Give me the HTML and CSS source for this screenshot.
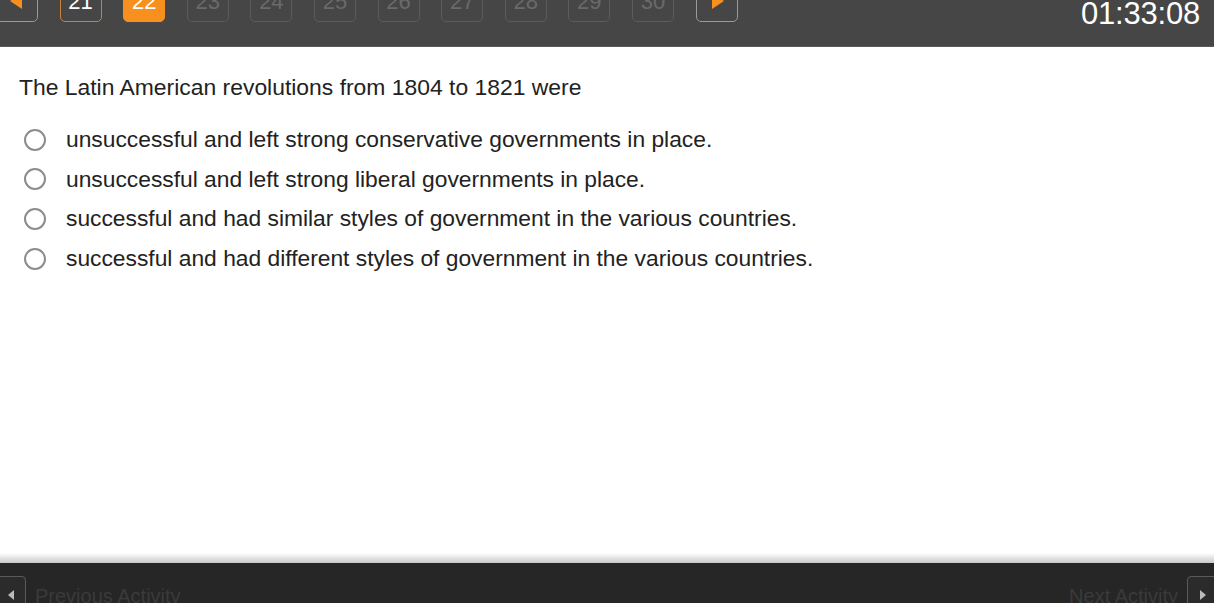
FILE: index.html
```html
<!DOCTYPE html>
<html lang="en">
<head>
    <meta charset="UTF-8">
    <title>Assignment</title>
    <link rel="stylesheet" href="styles.css">
</head>
<body>
    <header class="top-bar">
        <nav class="pager">
            <button class="page-btn arrow">
                <svg width="12" height="16" viewBox="0 0 12 16"><polygon points="12,0 12,16 0,8" fill="#f7901e"/></svg>
            </button>
            <button class="page-btn visited">21</button>
            <button class="page-btn current">22</button>
            <button class="page-btn">23</button>
            <button class="page-btn">24</button>
            <button class="page-btn">25</button>
            <button class="page-btn">26</button>
            <button class="page-btn">27</button>
            <button class="page-btn">28</button>
            <button class="page-btn">29</button>
            <button class="page-btn">30</button>
            <button class="page-btn arrow next">
                <svg width="12" height="16" viewBox="0 0 12 16"><polygon points="0,0 12,8 0,16" fill="#f7901e"/></svg>
            </button>
        </nav>
        <div class="timer">01:33:08</div>
    </header>

    <main class="question">
        <p class="prompt">The Latin American revolutions from 1804 to 1821 were</p>
        <ul class="options">
            <li><span class="radio"></span>unsuccessful and left strong conservative governments in place.</li>
            <li><span class="radio"></span>unsuccessful and left strong liberal governments in place.</li>
            <li><span class="radio"></span>successful and had similar styles of government in the various countries.</li>
            <li><span class="radio"></span>successful and had different styles of government in the various countries.</li>
        </ul>
    </main>

    <footer class="footer">
        <div class="footer-shade"></div>
        <div class="footer-bar">
            <div class="nav-side">
                <button class="foot-btn prev">
                    <svg width="6" height="10" viewBox="0 0 6 10"><polygon points="6,0 6,10 0,5" fill="#bbb"/></svg>
                </button>
                <span class="foot-label">Previous Activity</span>
            </div>
            <div class="nav-side">
                <span class="foot-label">Next Activity</span>
                <button class="foot-btn next">
                    <svg width="6" height="10" viewBox="0 0 6 10"><polygon points="0,0 6,5 0,10" fill="#bbb"/></svg>
                </button>
            </div>
        </div>
    </footer>
</body>
</html>
```

FILE: styles.css
```css
html, body {
    height: 100%;
}
body {
    margin: 0;
    font-family: "Liberation Sans", Arial, sans-serif;
    color: #222;
    background: #fff;
    display: flex;
    flex-direction: column;
    overflow: hidden;
}
.top-bar {
    height: 46px;
    background: #464646;
    border-bottom: 1px solid #5a5a5a;
    display: flex;
    justify-content: space-between;
    align-items: flex-start;
    flex-shrink: 0;
}
.pager {
    display: flex;
    gap: 21.6px;
    margin-top: -18px;
    margin-left: -4px;
}
.page-btn {
    width: 42px;
    height: 40px;
    box-sizing: border-box;
    border: 1.5px solid #5c5c5c;
    border-radius: 5px;
    background: transparent;
    color: #6a6a6a;
    font-family: "Liberation Sans", Arial, sans-serif;
    font-size: 22px;
    line-height: 30px;
    padding: 0;
    text-align: center;
}
.page-btn.visited {
    border-color: #c9823d;
    color: #fff;
}
.page-btn.current {
    background: #f7901e;
    border-color: #f7901e;
    color: #fff;
}
.page-btn.arrow {
    border-color: #9a9a9a;
    display: flex;
    justify-content: center;
    align-items: flex-start;
    padding-top: 10px;
}
.page-btn.arrow svg {
    margin-left: -2px;
}
.page-btn.next svg {
    margin-left: 2px;
}
.timer {
    color: #fff;
    font-size: 31px;
    line-height: 28px;
    padding-right: 14px;
    letter-spacing: -0.2px;
}
.question {
    flex: 1;
    padding: 0 19px;
}
.prompt {
    margin: 27px 0 0;
    font-size: 22.9px;
    line-height: 26px;
}
.options {
    list-style: none;
    margin: 20px 0 0;
    padding: 0 0 0 5px;
}
.options li {
    display: flex;
    align-items: center;
    gap: 20px;
    height: 39.6px;
    font-size: 22.8px;
}
.radio {
    width: 22px;
    height: 22px;
    box-sizing: border-box;
    border: 2px solid #8c8c8c;
    border-radius: 50%;
    flex-shrink: 0;
}
.footer {
    flex-shrink: 0;
}
.footer-shade {
    height: 10px;
    background: linear-gradient(#fff, #c8c8c8);
}
.footer-bar {
    height: 40px;
    background: #262626;
    display: flex;
    justify-content: space-between;
    align-items: flex-start;
    padding-top: 13px;
    box-sizing: border-box;
}
.nav-side {
    display: flex;
    align-items: flex-start;
    gap: 9px;
}
.foot-btn {
    width: 31px;
    height: 34px;
    box-sizing: border-box;
    border: 1.5px solid #5a5a5a;
    border-radius: 4px;
    background: #2b2b2b;
    padding: 13px 0 0;
    display: flex;
    justify-content: center;
    align-items: flex-start;
}
.foot-btn.prev {
    margin-left: -5px;
}
.foot-btn.next {
    margin-right: -4px;
}
.foot-label {
    color: #3a3a3a;
    font-size: 20px;
    line-height: 22px;
    margin-top: 9px;
}
```
